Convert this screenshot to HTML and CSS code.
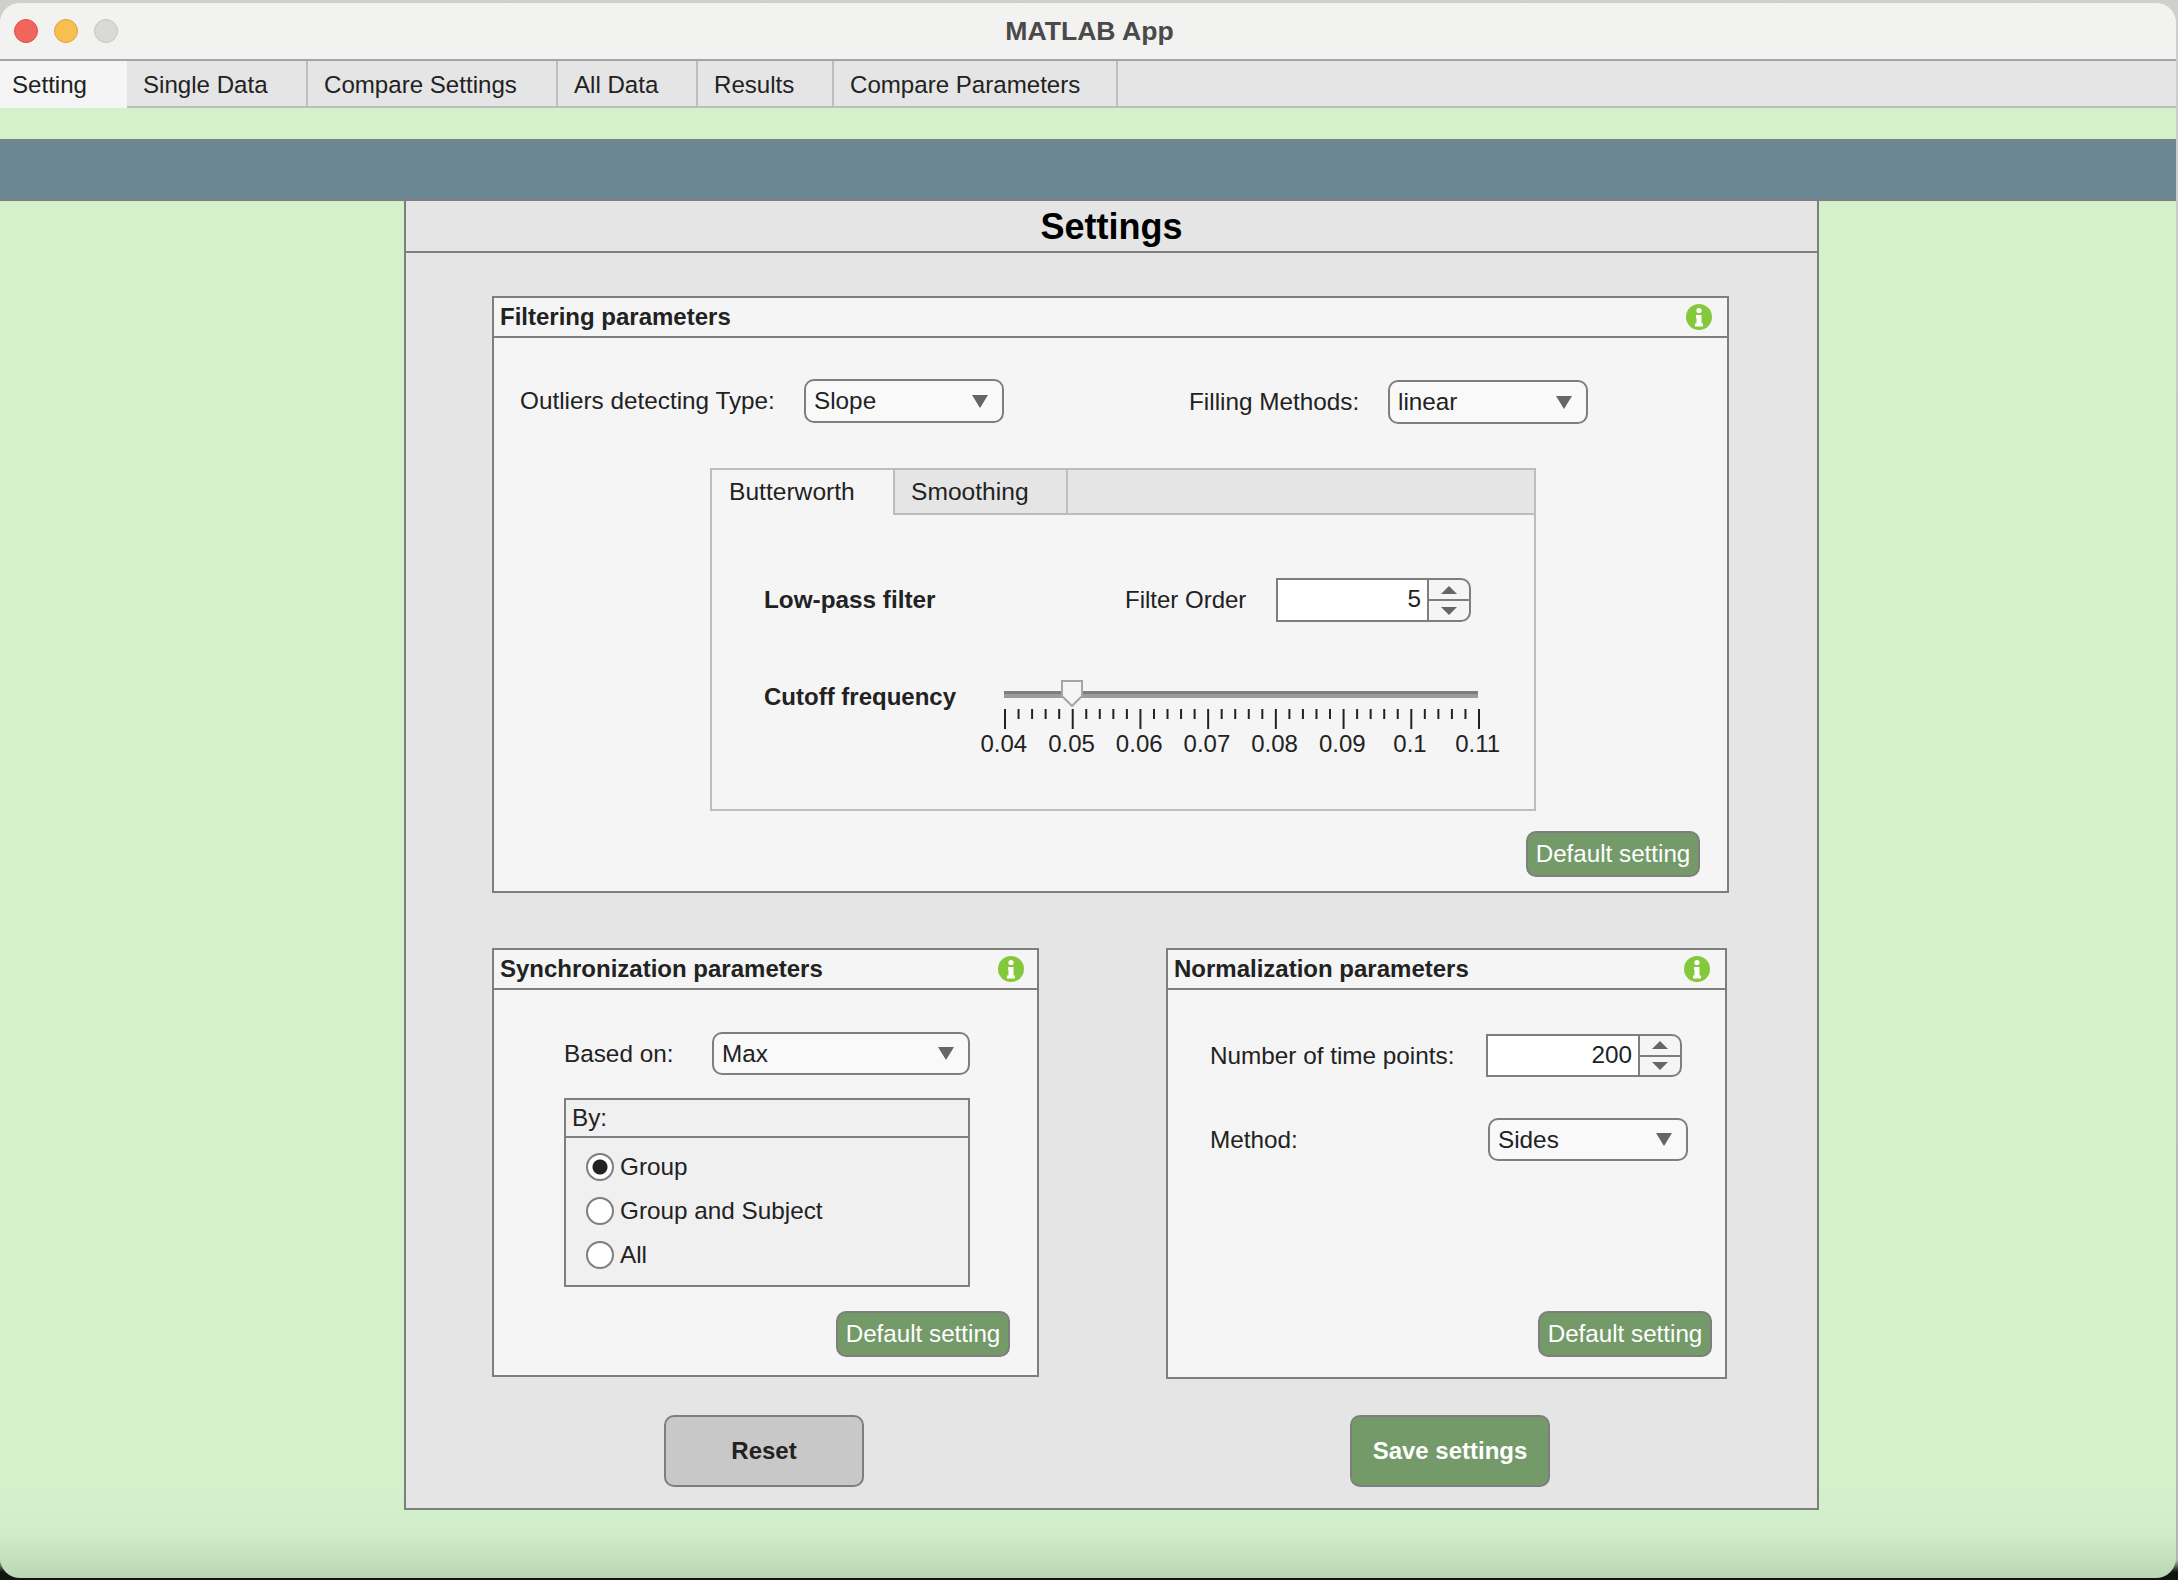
FILE: index.html
```html
<!DOCTYPE html>
<html lang="en">
<head>
    <meta charset="UTF-8">
    <title>MATLAB App</title>
    <link rel="stylesheet" href="styles.css">
</head>
<body>

<div class="window">
    <div class="titlebar">
        <div class="lights">
            <span class="light red"></span>
            <span class="light yellow"></span>
            <span class="light grey"></span>
        </div>
        <div class="app-title">MATLAB App</div>
    </div>

    <div class="main-tabs">
        <div class="main-tab active tab-setting">Setting</div>
        <div class="main-tab tab-single">Single Data</div>
        <div class="main-tab tab-compare">Compare Settings</div>
        <div class="main-tab tab-all">All Data</div>
        <div class="main-tab tab-results">Results</div>
        <div class="main-tab tab-params">Compare Parameters</div>
    </div>

    <div class="spacer"></div>
    <div class="band"></div>

    <div class="stage">
        <div class="settings">
            <h1 class="settings-title">Settings</h1>
            <div class="settings-body">

                <section class="panel filter-panel">
                    <div class="panel-head">
                        <span>Filtering parameters</span>
                        <svg class="info" viewBox="0 0 26 26"><circle cx="13" cy="13" r="13"/><circle class="w" cx="13" cy="6.5" r="2.6"/><path class="w" d="M10 11h5.500v8.500h1.500v3h-8v-3h1.500v-5.500h-0.500z"/></svg>
                    </div>
                    <div class="filter-top">
                        <div class="outliers">
                            <label class="outliers-label">Outliers detecting Type:</label>
                            <div class="dropdown slope-drop">Slope<i class="arrow"></i></div>
                        </div>
                        <div class="filling">
                            <label class="filling-label">Filling Methods:</label>
                            <div class="dropdown linear-drop">linear<i class="arrow"></i></div>
                        </div>
                    </div>

                    <div class="filter-tabs">
                        <div class="sub-tabs">
                            <div class="sub-tab active butter">Butterworth</div>
                            <div class="sub-tab smooth">Smoothing</div>
                        </div>
                        <div class="sub-body">
                            <div class="lowpass-row">
                                <b class="lowpass-label">Low-pass filter</b>
                                <label class="order-label">Filter Order</label>
                                <div class="spinner order-spin">
                                    <div class="spin-value">5</div>
                                    <div class="spin-btns"><div class="spin-btn"><i class="up"></i></div><div class="spin-btn"><i class="down"></i></div></div>
                                </div>
                            </div>
                            <div class="cutoff-row">
                                <b class="cutoff-label">Cutoff frequency</b>
                                <div class="slider">
                                    <div class="track"></div>
                                    <svg class="thumb" viewBox="0 0 22 27"><path d="M1 1h20v15l-10 10l-10-10z"/></svg>
                                    <svg class="ticks" id="ticks" width="476" height="20"></svg>
                                    <div class="tick-labels">
                                        <span>0.04</span><span>0.05</span><span>0.06</span><span>0.07</span><span>0.08</span><span>0.09</span><span>0.1</span><span>0.11</span>
                                    </div>
                                </div>
                            </div>
                        </div>
                    </div>

                    <div class="panel-foot filter-foot"><button class="default-btn">Default setting</button></div>
                </section>

                <div class="lower-row">
                    <section class="panel sync-panel">
                        <div class="panel-head">
                            <span>Synchronization parameters</span>
                            <svg class="info" viewBox="0 0 26 26"><circle cx="13" cy="13" r="13"/><circle class="w" cx="13" cy="6.5" r="2.6"/><path class="w" d="M10 11h5.500v8.500h1.500v3h-8v-3h1.500v-5.500h-0.500z"/></svg>
                        </div>
                        <div class="based-row">
                            <label class="based-label">Based on:</label>
                            <div class="dropdown max-drop">Max<i class="arrow"></i></div>
                        </div>
                        <div class="by-group">
                            <div class="by-head">By:</div>
                            <div class="by-body">
                                <div class="radio-row"><span class="radio on"></span>Group</div>
                                <div class="radio-row"><span class="radio"></span>Group and Subject</div>
                                <div class="radio-row"><span class="radio"></span>All</div>
                            </div>
                        </div>
                        <div class="panel-foot sync-foot"><button class="default-btn">Default setting</button></div>
                    </section>

                    <section class="panel norm-panel">
                        <div class="panel-head">
                            <span>Normalization parameters</span>
                            <svg class="info" viewBox="0 0 26 26"><circle cx="13" cy="13" r="13"/><circle class="w" cx="13" cy="6.5" r="2.6"/><path class="w" d="M10 11h5.500v8.500h1.500v3h-8v-3h1.500v-5.500h-0.500z"/></svg>
                        </div>
                        <div class="points-row">
                            <label class="points-label">Number of time points:</label>
                            <div class="spinner points-spin">
                                <div class="spin-value">200</div>
                                <div class="spin-btns"><div class="spin-btn"><i class="up"></i></div><div class="spin-btn"><i class="down"></i></div></div>
                            </div>
                        </div>
                        <div class="method-row">
                            <label class="method-label">Method:</label>
                            <div class="dropdown sides-drop">Sides<i class="arrow"></i></div>
                        </div>
                        <div class="panel-foot norm-foot"><button class="default-btn">Default setting</button></div>
                    </section>
                </div>

                <div class="actions">
                    <button class="big-btn reset-btn">Reset</button>
                    <button class="big-btn save-btn">Save settings</button>
                </div>
            </div>
        </div>
    </div>
</div>

<script>
    // slider ticks: one major every 5 minor steps
    var svg = document.getElementById("ticks");
    var lines = "";
    for (var i = 0; i <= 35; i++) {
        var x = 1 + i * 474 / 35;
        var h = i % 5 == 0 ? 20 : 10;
        lines += '<line x1="' + x + '" x2="' + x + '" y1="0" y2="' + h + '"/>';
    }
    svg.innerHTML = lines;
</script>

</body>
</html>
```

FILE: styles.css
```css
* {
    box-sizing: border-box;
}
html, body {
    margin: 0;
    padding: 0;
}
body {
    width: 2178px;
    height: 1580px;
    overflow: hidden;
    background: linear-gradient(#cfcfcd 0, #b5b5b3 1560px, #10140f 1572px, #10140f 100%);
    font-family: "Liberation Sans", Arial, sans-serif;
    font-size: 24.3px;
    color: #222;
}
label {
    display: block;
}
b {
    font-size: 24px;
}

/* window */
.window {
    height: 1575px;
    margin: 3px 2px 0 0;
    border-radius: 20px;
    overflow: hidden;
    background: linear-gradient(#d3f2cc 0, #d3f2cc 1480px, #d0edc9 1530px, #bbd6b4 1575px);
}
.titlebar {
    height: 58px;
    display: flex;
    align-items: center;
    background-color: #f2f2f0;
    border-bottom: 2px solid #a5a5a5;
}
.lights {
    display: flex;
    gap: 16px;
    padding-left: 14px;
    width: 200px;
}
.light {
    width: 24px;
    height: 24px;
    border-radius: 50%;
}
.red { background-color: #f1655c; border: 1px solid #df5148; }
.yellow { background-color: #f6bf4f; border: 1px solid #dfa53a; }
.grey { background-color: #d9d9d7; border: 1px solid #c4c4c2; }
.app-title {
    width: 1779px;
    text-align: center;
    font-size: 26.6px;
    font-weight: bold;
    color: #4a4a4a;
}

/* top tab strip */
.main-tabs {
    height: 47px;
    display: flex;
    background-color: #e5e5e5;
    border-bottom: 2px solid #bdbdbd;
    font-size: 24.1px;
}
.main-tab {
    height: 45px;
    padding: 6px 0 0 16px;
    border-right: 2px solid #bdbdbd;
    line-height: 36px;
}
.main-tab.active {
    background-color: #f5f5f5;
    border-right: none;
    height: 47px;
    padding-left: 12px;
}
.tab-setting { width: 127px; }
.tab-single { width: 181px; }
.tab-compare { width: 250px; }
.tab-all { width: 140px; }
.tab-results { width: 136px; }
.tab-params { width: 284px; }

.spacer {
    height: 31px;
}
.band {
    height: 62px;
    background-color: #6b8793;
    border-top: 2px solid #7e7e7e;
    border-bottom: 2px solid #7e7e7e;
}

/* settings card */
.stage {
    padding-left: 404px;
}
.settings {
    width: 1415px;
    height: 1309px;
    background-color: #e5e5e5;
    border: 2px solid #7e7e7e;
    border-top: none;
}
.settings-title {
    height: 52px;
    margin: 0;
    text-align: center;
    font-size: 36px;
    line-height: 52px;
    color: #000;
    border-bottom: 2px solid #7e7e7e;
}
.settings-body {
    padding: 43px 0 0 86px;
}

/* panels */
.panel {
    background-color: #f5f5f5;
    border: 2px solid #7e7e7e;
}
.panel-head {
    height: 40px;
    display: flex;
    justify-content: space-between;
    align-items: center;
    padding: 0 15px 0 6px;
    font-size: 24px;
    font-weight: bold;
    border-bottom: 2px solid #7e7e7e;
}
.sync-panel .panel-head {
    padding-right: 13px;
}
.info {
    width: 26px;
    height: 26px;
    fill: #84c83c;
}
.info .w {
    fill: #fff;
}
.filter-panel {
    width: 1237px;
    height: 597px;
}
.filter-top {
    display: flex;
    padding: 40px 0 0 26px;
}
.outliers, .filling {
    display: flex;
    align-items: center;
}
.outliers-label { width: 284px; }
.filling {
    margin: 2px 0 0 185px;
}
.filling-label { width: 199px; }

.dropdown {
    height: 44px;
    display: flex;
    justify-content: space-between;
    align-items: center;
    padding: 0 14px 0 8px;
    border: 2px solid #7e7e7e;
    border-radius: 10px;
    background-color: #f9f9f9;
}
.arrow {
    width: 0;
    height: 0;
    border-left: 8.5px solid transparent;
    border-right: 8.5px solid transparent;
    border-top: 13px solid #666;
}
.slope-drop, .linear-drop { width: 200px; }
.max-drop { width: 258px; height: 43px; }
.sides-drop { width: 200px; height: 43px; }

/* butterworth / smoothing tabs */
.filter-tabs {
    width: 826px;
    height: 343px;
    margin: 44px 0 0 216px;
    border: 2px solid #bdbdbd;
}
.sub-tabs {
    height: 45px;
    display: flex;
    background-color: #e5e5e5;
    border-bottom: 2px solid #bdbdbd;
    font-size: 24.6px;
}
.sub-tab {
    height: 43px;
    padding: 0 0 0 16px;
    line-height: 44px;
    border-right: 2px solid #bdbdbd;
}
.sub-tab.active {
    background-color: #f5f5f5;
    height: 45px;
}
.butter { width: 183px; padding-left: 17px; }
.smooth { width: 173px; }
.sub-body {
    padding: 63px 0 0 52px;
}
.lowpass-row {
    display: flex;
    align-items: center;
    height: 44px;
}
.lowpass-label { width: 361px; font-size: 24.3px; }
.order-label { width: 151px; font-size: 24px; }
.spinner {
    display: flex;
    border: 2px solid #7e7e7e;
    border-radius: 0 10px 10px 0;
    overflow: hidden;
}
.spin-value {
    flex: 1;
    text-align: right;
    padding-right: 6px;
    background-color: #fff;
    border-right: 2px solid #7e7e7e;
    line-height: 38px;
}
.spin-btns {
    width: 40px;
    display: flex;
    flex-direction: column;
}
.spin-btn {
    flex: 1;
    display: flex;
    justify-content: center;
    align-items: center;
}
.spin-btn:first-child {
    border-bottom: 2px solid #7e7e7e;
}
.up {
    border-left: 8px solid transparent;
    border-right: 8px solid transparent;
    border-bottom: 8px solid #666;
}
.down {
    border-left: 8px solid transparent;
    border-right: 8px solid transparent;
    border-top: 8px solid #666;
}
.order-spin { width: 195px; height: 44px; }
.points-spin { width: 196px; height: 43px; }

.cutoff-row {
    display: flex;
    margin-top: 58px;
}
.cutoff-label {
    width: 240px;
    line-height: 28px;
    margin-top: 3px;
}
.slider {
    position: relative;
    width: 476px;
    padding-top: 11px;
}
.track {
    width: 474px;
    height: 7px;
    background-color: #9b9b9b;
    border-top: 3px solid #7e7e7e;
}
.thumb {
    position: absolute;
    left: 57px;
    top: 0;
    width: 22px;
    height: 27px;
    fill: #f5f5f5;
    stroke: #a5a5a5;
    stroke-width: 2;
}
.ticks {
    display: block;
    margin-top: 11px;
    stroke: #222;
    stroke-width: 2;
}
.tick-labels {
    display: flex;
    width: 542px;
    margin-left: -34px;
    margin-top: 1px;
    font-size: 24px;
}
.tick-labels span {
    width: 67.7px;
    text-align: center;
    white-space: nowrap;
}

.panel-foot {
    display: flex;
    justify-content: flex-end;
}
.default-btn {
    height: 46px;
    padding: 0;
    font-family: inherit;
    font-size: 24.2px;
    color: #fff;
    background-color: #739a68;
    border: 2px solid #7e7e7e;
    border-radius: 10px;
}
.filter-foot {
    margin-top: 20px;
    padding-right: 27px;
}
.filter-foot .default-btn { width: 174px; }

/* lower panels */
.lower-row {
    display: flex;
    gap: 127px;
    margin-top: 55px;
}
.sync-panel {
    width: 547px;
    height: 429px;
}
.based-row {
    display: flex;
    align-items: center;
    padding: 42px 0 0 70px;
}
.based-label { width: 148px; }
.by-group {
    width: 406px;
    height: 189px;
    margin: 23px 0 0 70px;
    background-color: #f0f0f0;
    border: 2px solid #7e7e7e;
}
.by-head {
    height: 38px;
    padding-left: 6px;
    line-height: 36px;
    border-bottom: 2px solid #7e7e7e;
}
.by-body {
    padding: 7px 0 0 20px;
}
.radio-row {
    height: 44px;
    display: flex;
    align-items: center;
    gap: 6px;
}
.radio {
    width: 28px;
    height: 28px;
    border: 2px solid #7e7e7e;
    border-radius: 50%;
    background-color: #fff;
}
.radio.on {
    background: radial-gradient(circle, #222 0, #222 7px, #fff 8px);
}
.sync-foot {
    margin-top: 24px;
    padding-right: 27px;
}
.sync-foot .default-btn { width: 174px; }

.norm-panel {
    width: 561px;
    height: 431px;
}
.points-row {
    display: flex;
    align-items: center;
    padding: 44px 0 0 42px;
}
.points-label { width: 276px; }
.method-row {
    display: flex;
    align-items: center;
    padding: 41px 0 0 42px;
}
.method-label { width: 278px; }
.norm-foot {
    margin-top: 150px;
    padding-right: 13px;
}
.norm-foot .default-btn { width: 174px; }

/* bottom buttons */
.actions {
    display: flex;
    margin-top: 36px;
}
.big-btn {
    width: 200px;
    height: 72px;
    padding: 0;
    font-family: inherit;
    font-size: 24px;
    font-weight: bold;
    border: 2px solid #7e7e7e;
    border-radius: 10px;
}
.reset-btn {
    margin-left: 172px;
    color: #222;
    background-color: #c8c8c8;
}
.save-btn {
    margin-left: 486px;
    color: #fff;
    background-color: #739a68;
}
```
